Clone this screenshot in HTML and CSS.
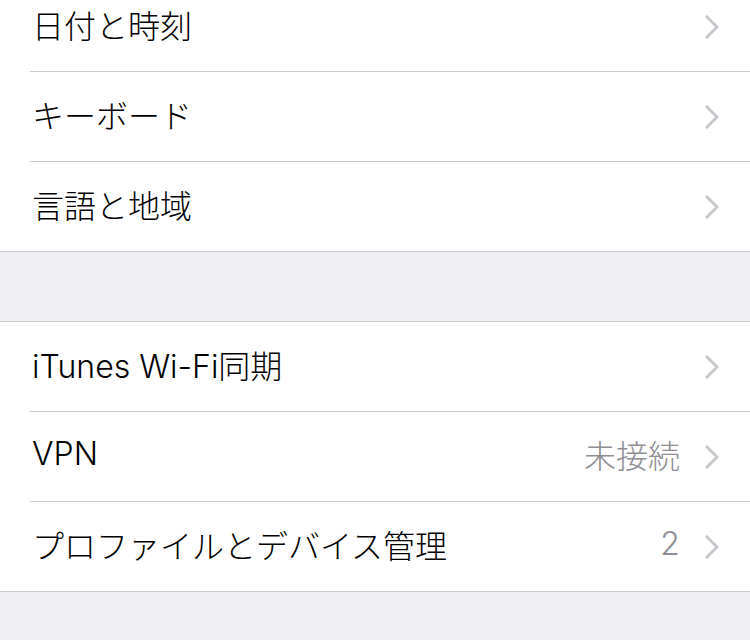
FILE: index.html
```html
<!DOCTYPE html>
<html lang="ja">
<head>
<meta charset="utf-8">
<link rel="stylesheet" href="styles.css">
</head>
<body>
<div class="page">
  <div class="group first">
    <div class="row"><span class="label">日付と時刻</span><span class="right"><svg class="chev" viewBox="0 0 14 24"><path d="M2 2 L12 12 L2 22"/></svg></span></div>
    <div class="row"><span class="label">キーボード</span><span class="right"><svg class="chev" viewBox="0 0 14 24"><path d="M2 2 L12 12 L2 22"/></svg></span></div>
    <div class="row"><span class="label">言語と地域</span><span class="right"><svg class="chev" viewBox="0 0 14 24"><path d="M2 2 L12 12 L2 22"/></svg></span></div>
  </div>
  <div class="spacer"></div>
  <div class="group">
    <div class="row"><span class="label">iTunes Wi-Fi同期</span><span class="right"><svg class="chev" viewBox="0 0 14 24"><path d="M2 2 L12 12 L2 22"/></svg></span></div>
    <div class="row"><span class="label">VPN</span><span class="right"><span class="value">未接続</span><svg class="chev" viewBox="0 0 14 24"><path d="M2 2 L12 12 L2 22"/></svg></span></div>
    <div class="row"><span class="label">プロファイルとデバイス管理</span><span class="right"><span class="value">2</span><svg class="chev" viewBox="0 0 14 24"><path d="M2 2 L12 12 L2 22"/></svg></span></div>
  </div>
</div>
</body>
</html>
```

FILE: styles.css
```css
html, body {
  margin: 0;
  padding: 0;
  background: #efeff4;
}
body {
  font-family: Inter, "Noto Sans CJK JP", sans-serif;
  font-weight: 300;
  color: #000;
  overflow: hidden;
}
.page {
  margin-top: -18px;
}
.group {
  background: #fff;
  border-top: 1px solid #c8c7cc;
  border-bottom: 1px solid #c8c7cc;
}
.group.first {
  border-top: none;
}
.row {
  height: 89px;
  display: flex;
  align-items: center;
  justify-content: space-between;
  padding: 0 31px 0 32px;
}
.row + .row {
  border-top: 1px solid #c8c7cc;
  margin-left: 30px;
  padding-left: 2px;
}
.label {
  font-size: 32px;
  padding-bottom: 6px;
}
.right {
  display: flex;
  align-items: center;
  gap: 25px;
}
.value {
  font-size: 32px;
  color: #8e8e93;
  padding-bottom: 6px;
}
.chev {
  width: 14px;
  height: 24px;
  display: block;
}
.chev path {
  fill: none;
  stroke: #c7c7cc;
  stroke-width: 3;
  stroke-linecap: square;
  stroke-linejoin: miter;
}
.spacer {
  height: 69px;
}
```
